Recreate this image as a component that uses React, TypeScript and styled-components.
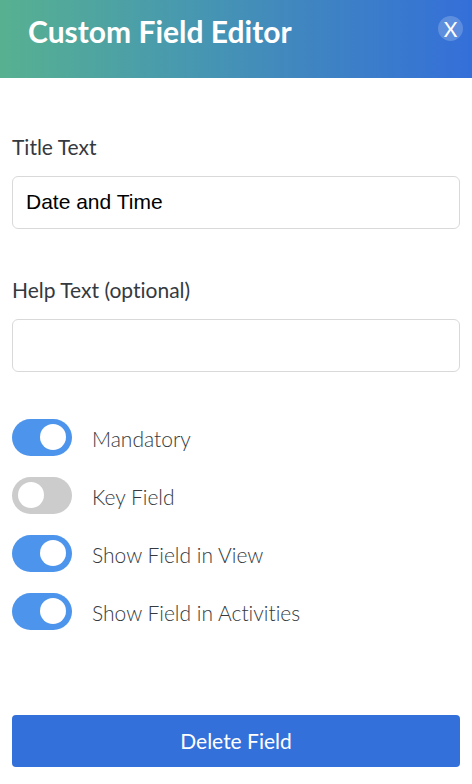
import React, { useState } from "react";
import styled, { createGlobalStyle } from "styled-components";

const GlobalStyle = createGlobalStyle`
  *, *::before, *::after { box-sizing: border-box; }
  body {
    margin: 0;
    background: #fff;
    color: #343a40;
    font-family: Lato, sans-serif;
    font-size: 21px;
    font-variant-ligatures: none;
  }
`;

const Header = styled.header`
  display: flex;
  justify-content: space-between;
  align-items: flex-start;
  height: 78px;
  padding: 13px 9px 0 28px;
  background: linear-gradient(90deg, #57b190, #4798b0 40%, #4086c0 64%, #346fd9);
`;

const Heading = styled.h1`
  margin: 0;
  color: #fff;
  font-size: 30px;
  line-height: 36px;
  font-weight: 700;
`;

const CloseButton = styled.button`
  width: 25px;
  height: 25px;
  margin-top: 3px;
  padding: 0;
  border: 0;
  border-radius: 50%;
  background: rgba(255, 255, 255, 0.2);
  color: #fff;
  font: 400 21px/25px Lato, sans-serif;
  cursor: pointer;
`;

const Form = styled.form`
  display: flex;
  flex-direction: column;
  padding: 53px 12px 16px;
`;

const Field = styled.div`
  display: flex;
  flex-direction: column;
  gap: 13px;
  margin-bottom: 45px;
`;

const FieldLabel = styled.label`
  line-height: 32px;
`;

const TextInput = styled.input`
  width: 100%;
  height: 53px;
  padding: 0 13px 2px;
  border: 1px solid #d9d9d9;
  border-radius: 6px;
  background: #fff;
  color: #000;
  font: 400 21px "Liberation Sans", Arial, sans-serif;
`;

const Switches = styled.div`
  display: flex;
  flex-direction: column;
  gap: 21px;
  margin: 2px 0 85px;
`;

const SwitchRow = styled.label`
  display: flex;
  align-items: center;
  gap: 20px;
  height: 37px;
  font-weight: 300;
  cursor: pointer;
`;

const Switch = styled.input`
  appearance: none;
  display: flex;
  align-items: center;
  width: 60px;
  height: 37px;
  margin: 0;
  padding: 0 6px 1px;
  border-radius: 19px;
  background: #ccc;
  cursor: pointer;

  &::before {
    content: "";
    width: 26px;
    height: 26px;
    border-radius: 50%;
    background: #fff;
  }

  &:checked {
    justify-content: flex-end;
    background: #4d95ec;
  }
`;

const SwitchText = styled.span`
  padding-top: 2px;
`;

const DeleteButton = styled.button`
  height: 52px;
  padding: 0 12px 2px;
  border: 0;
  border-radius: 4px;
  background: #3470da;
  color: #fff;
  font: 400 21px Lato, sans-serif;
  cursor: pointer;
`;

const options = [
  { name: "mandatory", label: "Mandatory", on: true },
  { name: "key", label: "Key Field", on: false },
  { name: "view", label: "Show Field in View", on: true },
  { name: "activities", label: "Show Field in Activities", on: true },
];

export default function App() {
  const [title, setTitle] = useState("Date and Time");
  const [help, setHelp] = useState("");

  return (
    <>
      <GlobalStyle />
      <Header>
        <Heading>Custom Field Editor</Heading>
        <CloseButton type="button" aria-label="Close">X</CloseButton>
      </Header>
      <Form onSubmit={(e) => e.preventDefault()}>
        <Field>
          <FieldLabel htmlFor="title">Title Text</FieldLabel>
          <TextInput id="title" value={title} onChange={(e) => setTitle(e.target.value)} />
        </Field>
        <Field>
          <FieldLabel htmlFor="help">Help Text (optional)</FieldLabel>
          <TextInput id="help" value={help} onChange={(e) => setHelp(e.target.value)} />
        </Field>
        <Switches>
          {options.map((o) => (
            <SwitchRow key={o.name}>
              <Switch type="checkbox" name={o.name} defaultChecked={o.on} />
              <SwitchText>{o.label}</SwitchText>
            </SwitchRow>
          ))}
        </Switches>
        <DeleteButton type="button">Delete Field</DeleteButton>
      </Form>
    </>
  );
}
